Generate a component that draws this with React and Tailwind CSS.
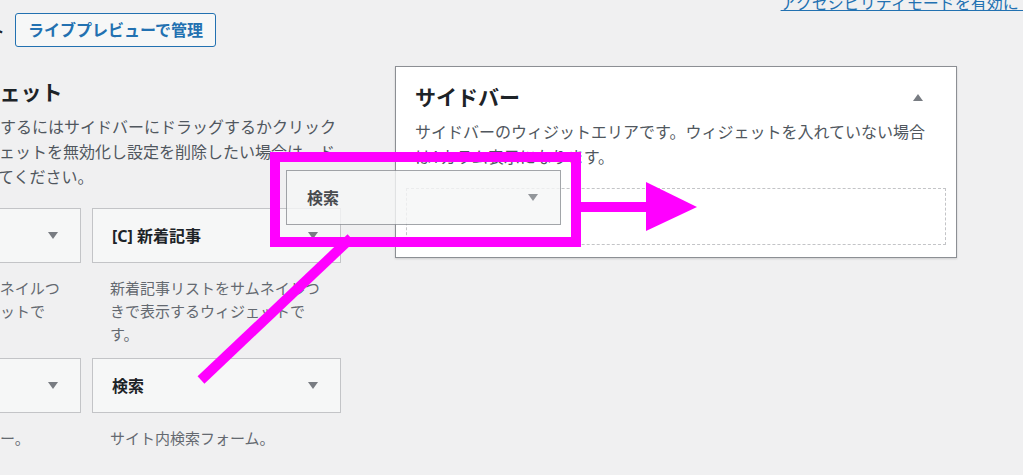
import React from 'react';

function Caret({ up }) {
  return (
    <svg width="10" height="7" viewBox="0 0 10 7" className="shrink-0">
      <path d={up ? 'M0 7 L5 0 L10 7 Z' : 'M0 0 L10 0 L5 7 Z'} fill="#787c82" />
    </svg>
  );
}

function WidgetCard({ title, desc }) {
  return (
    <div>
      <div className="h-[55px] border border-[#c3c4c7] bg-[#f6f7f7] flex items-center justify-between pl-[19px] pr-[22px]">
        <h3 className="text-[16px] leading-[20px] font-bold text-[#1d2327] whitespace-nowrap">{title}</h3>
        <Caret />
      </div>
      <p className="mt-[14px] pl-[18px] pr-[16px] text-[15px] leading-[23px] text-[#646970]">{desc}</p>
    </div>
  );
}

const widgets = [
  { title: '[C] 人気記事', desc: '人気記事リストをサムネイルつきで表示するウィジェットです。' },
  { title: '[C] 新着記事', desc: '新着記事リストをサムネイルつきで表示するウィジェットです。' },
  { title: 'カレンダー', desc: 'サイトの投稿カレンダー。' },
  { title: '検索', desc: 'サイト内検索フォーム。' },
];

export default function App() {
  return (
    <div className="relative w-[1023px] h-[475px] overflow-hidden bg-[#f0f0f1] font-['Noto_Sans','Noto_Sans_CJK_JP',sans-serif]">
      {/* 画面オプション上のリンク */}
      <div className="flex justify-end mt-[-7px] mr-[-28px] h-[20px]">
        <a href="#" className="text-[16px] leading-[20px] text-[#2271b1] underline whitespace-nowrap">
          アクセシビリティモードを有効にする
        </a>
      </div>

      <div className="flex items-center h-[34px]">
        <h1 className="ml-[-132px] text-[23px] leading-[23px] text-[#1d2327] whitespace-nowrap">ウィジェット</h1>
        <button className="ml-[9px] h-[34px] px-[12px] border border-[#2271b1] rounded-[3px] bg-[#f6f7f7] text-[16px] font-semibold text-[#2271b1] whitespace-nowrap">
          ライブプレビューで管理
        </button>
      </div>

      <div className="flex items-start ml-[-168px] mt-[19px]">
        {/* 利用できるウィジェット */}
        <div className="w-[509px] shrink-0">
          <h2 className="mt-[16px] text-[21px] leading-[21px] font-bold text-[#1d2327] whitespace-nowrap">利用できるウィジェット</h2>
          <p className="mt-[12px] pl-[8px] text-[16px] leading-[25px] text-[#50575e]">
            ウィジェットを有効化するにはサイドバーにドラッグするかクリックしてください。ウィジェットを無効化し設定を削除したい場合は、ドラッグしてもとに戻してください。
          </p>
          <div className="mt-[18px] grid grid-cols-[249px_249px] gap-x-[11px] gap-y-[12px]">
            {widgets.map(w => (
              <WidgetCard key={w.title} title={w.title} desc={w.desc} />
            ))}
          </div>
        </div>

        {/* サイドバー */}
        <div className="ml-[54px] w-[562px] shrink-0 border border-[#8c8f94] bg-white shadow-[0_1px_2px_rgba(0,0,0,0.15)] px-[10px] pt-[20px] pb-[12px]">
          <div className="flex items-center justify-between px-[9px]">
            <h2 className="text-[21px] leading-[21px] font-bold text-[#1d2327]">サイドバー</h2>
            <span className="mr-[14px] flex"><Caret up /></span>
          </div>
          <p className="mt-[12px] px-[9px] text-[16px] leading-[25px] text-[#50575e]">
            サイドバーのウィジットエリアです。ウィジェットを入れていない場合は1カラム表示になります。
          </p>
          <div className="mt-[18px] h-[57px] border border-dashed border-[#c3c4c7]"></div>
        </div>
      </div>

      {/* ドラッグ中のウィジェット */}
      <div className="absolute left-[286px] top-[170px] w-[275px] h-[55px] border border-[#8c8f94] bg-[#f6f7f7] opacity-80 flex items-center justify-between pl-[20px] pr-[22px]">
        <h3 className="text-[16px] leading-[20px] font-bold text-[#1d2327]">検索</h3>
        <Caret />
      </div>

      {/* 注釈 */}
      <svg className="absolute inset-0 pointer-events-none" width="1023" height="475" viewBox="0 0 1023 475">
        <rect x="275" y="157" width="301" height="85" fill="none" stroke="#ff00ff" strokeWidth="10" />
        <line x1="576" y1="207" x2="650" y2="207" stroke="#ff00ff" strokeWidth="10" />
        <polygon points="646,182 697,207 646,231" fill="#ff00ff" />
        <line x1="351" y1="238" x2="201" y2="380" stroke="#ff00ff" strokeWidth="10" />
      </svg>
    </div>
  );
}
